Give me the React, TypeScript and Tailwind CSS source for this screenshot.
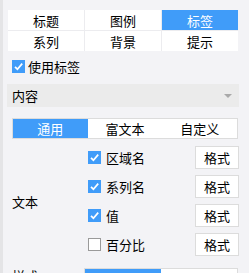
import React from 'react';

const Check: React.FC<{ checked?: boolean }> = ({ checked }) =>
  checked ? (
    <span className="flex h-[13px] w-[13px] items-center justify-center bg-[#409cf9]">
      <svg width="11" height="11" viewBox="0 0 11 11">
        <path d="M2 5.8 L4.4 8.2 L9.2 2.6" fill="none" stroke="#fff" strokeWidth="1.7" />
      </svg>
    </span>
  ) : (
    <span className="h-[13px] w-[13px] border border-[#9a9a9a] bg-white" />
  );

const topTabs = ['标题', '图例', '标签', '系列', '背景', '提示'];
const subTabs = ['通用', '富文本', '自定义'];
const fields = [
  { label: '区域名', checked: true },
  { label: '系列名', checked: true },
  { label: '值', checked: true },
  { label: '百分比', checked: false },
];

export default function App() {
  return (
    <div
      className="flex h-[273px] w-[249px] overflow-hidden bg-[#f3f3f6] text-[13px] text-black"
      style={{ fontFamily: '"Noto Sans CJK SC", "Noto Sans", sans-serif' }}
    >
      <div className="w-[3px] shrink-0 bg-[#e4e4e6]" />
      <div className="flex-1 pt-[10px]">
        {/* Top tabs */}
        <div className="ml-[5px] grid w-[230px] grid-cols-3 gap-px bg-[#ececef]">
          {topTabs.map((t) => (
            <div
              key={t}
              className={`flex h-5 items-center justify-center leading-none ${
                t === '标签' ? 'bg-[#409cf9] text-white' : 'bg-white'
              }`}
            >
              {t}
            </div>
          ))}
        </div>

        {/* Use label */}
        <div className="ml-[9px] mt-[9px] flex h-[13px] items-center gap-[3px]">
          <Check checked />
          <span className="leading-none">使用标签</span>
        </div>

        {/* Dropdown */}
        <div className="ml-[4px] mt-[11px] flex h-[23px] w-[232px] items-center justify-between bg-[#ebebeb] pl-[5px] pr-[7px]">
          <span className="leading-none">内容</span>
          <span className="h-0 w-0 border-x-[4px] border-t-[4px] border-x-transparent border-t-[#a9a9a9]" />
        </div>

        {/* Sub tabs */}
        <div className="ml-[9px] mt-[11px] grid h-[21px] w-[226px] grid-cols-3 border border-[#dcdcdc] bg-white">
          {subTabs.map((t, i) => (
            <div
              key={t}
              className={`flex items-center justify-center leading-none ${
                i === 0 ? 'bg-[#409cf9] text-white' : ''
              }`}
            >
              {t}
            </div>
          ))}
        </div>

        {/* Text fields */}
        <div className="mt-[7px] flex">
          <div className="flex w-[85px] items-center pl-[9px] leading-none">文本</div>
          <div className="flex flex-col gap-[6px]">
            {fields.map((f) => (
              <div key={f.label} className="flex h-[23px] w-[151px] items-center justify-between">
                <div className="flex items-center gap-[5px]">
                  <Check checked={f.checked} />
                  <span className="leading-none">{f.label}</span>
                </div>
                <button className="flex h-[23px] w-[44px] items-center justify-center border border-[#dcdcdc] bg-white leading-none">
                  格式
                </button>
              </div>
            ))}
          </div>
        </div>

        {/* Style */}
        <div className="mt-[12px] flex">
          <div className="w-[81px] pl-[9px] pt-px leading-none">样式</div>
          <div className="grid h-[21px] w-[154px] grid-cols-2 border border-[#dcdcdc] bg-white">
            <div className="flex items-center justify-center bg-[#409cf9] text-white leading-none">文本</div>
            <div className="flex items-center justify-center leading-none">标签</div>
          </div>
        </div>
      </div>
    </div>
  );
}
